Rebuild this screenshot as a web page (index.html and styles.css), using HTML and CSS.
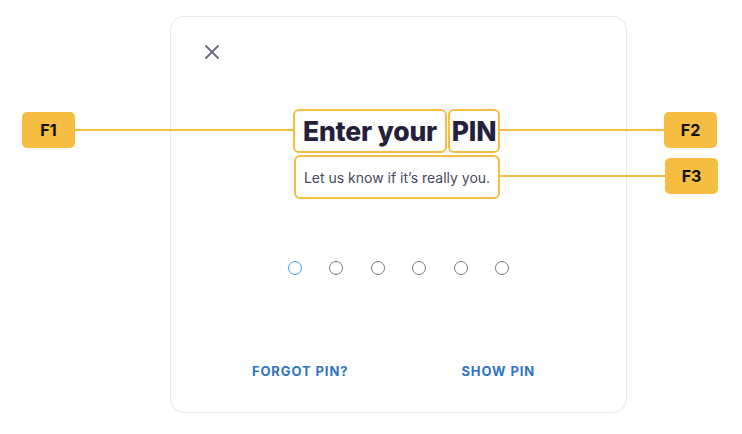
FILE: index.html
```html
<!DOCTYPE html>
<html>
<head>
<meta charset="utf-8">
<link rel="stylesheet" href="styles.css">
</head>
<body>
<div class="page">
  <div class="card">
    <button class="close" aria-label="Close">
      <svg width="14" height="14" viewBox="0 0 14 14"><path d="M1 1L13 13M13 1L1 13" stroke="#6b6880" stroke-width="1.8" stroke-linecap="round" fill="none"/></svg>
    </button>
    <div class="title">
      <span class="hl hl-f1">Enter your</span><span class="hl hl-f2">PIN</span>
    </div>
    <div class="subtitle-row">
      <span class="hl hl-f3">Let us know if it’s really you.</span>
    </div>
    <div class="dots">
      <span class="dot active"></span>
      <span class="dot"></span>
      <span class="dot"></span>
      <span class="dot"></span>
      <span class="dot"></span>
      <span class="dot"></span>
    </div>
    <div class="actions">
      <a class="action">FORGOT PIN?</a>
      <a class="action">SHOW PIN</a>
    </div>
  </div>

  <div class="line line-f1"></div>
  <div class="line line-f2"></div>
  <div class="line line-f3"></div>
  <div class="tag tag-f1">F1</div>
  <div class="tag tag-f2">F2</div>
  <div class="tag tag-f3">F3</div>
</div>
</body>
</html>
```
FILE: styles.css
```css
* { box-sizing: border-box; }
html, body { margin: 0; padding: 0; background: #ffffff; }
body { font-family: "Inter", "Liberation Sans", sans-serif; }

.page {
  position: relative;
  width: 742px;
  height: 434px;
  padding: 16px 0 0 170px;
}

.card {
  width: 457px;
  height: 397px;
  border: 1px solid #e7e7ea;
  border-radius: 14px;
  display: flex;
  flex-direction: column;
  align-items: center;
  padding: 27px 0 0 0;
}

.close {
  align-self: flex-start;
  margin-left: 33px;
  width: 16px;
  height: 16px;
  padding: 1px;
  border: 0;
  background: transparent;
  display: flex;
  align-items: center;
  justify-content: center;
}

.title {
  margin-top: 49px;
  margin-left: -4px;
  display: flex;
  gap: 1px;
  font-weight: 800;
  font-size: 26.5px;
  letter-spacing: -0.2px;
  color: #25213b;
}

.hl {
  border: 2px solid #f5bd41;
  border-radius: 6px;
  display: flex;
  align-items: center;
  justify-content: center;
}

.hl-f1 { width: 154px; height: 44px; }
.hl-f2 { width: 52px; height: 44px; }

.subtitle-row { margin-top: 2px; margin-left: -3px; }
.hl-f3 {
  width: 206px;
  height: 44px;
  font-size: 14px;
  font-weight: 400;
  color: #4a4760;
}

.dots {
  margin-top: 62px;
  display: flex;
  gap: 27.6px;
}
.dot {
  width: 14px;
  height: 14px;
  border-radius: 50%;
  border: 1.5px solid #77748a;
}
.dot.active { border-color: #4a9eea; }

.actions {
  margin-top: 88px;
  margin-left: -10px;
  display: flex;
  gap: 113px;
}
.action {
  font-size: 13px;
  font-weight: 700;
  letter-spacing: 0.9px;
  color: #2f74c2;
}

.line {
  position: absolute;
  height: 2px;
  background: #f5bd41;
}
.line-f1 { left: 75px; width: 219px; top: 129px; }
.line-f2 { left: 499px; width: 166px; top: 129px; }
.line-f3 { left: 499px; width: 166px; top: 175px; }

.tag {
  position: absolute;
  width: 53px;
  height: 36px;
  border-radius: 5px;
  background: #f5bd41;
  color: #111111;
  font-family: "Inter", "Liberation Sans", sans-serif;
  font-weight: 700;
  font-size: 16px;
  display: flex;
  align-items: center;
  justify-content: center;
}
.tag-f1 { left: 22px; top: 112px; }
.tag-f2 { left: 664px; top: 112px; }
.tag-f3 { left: 665px; top: 158px; }
```
